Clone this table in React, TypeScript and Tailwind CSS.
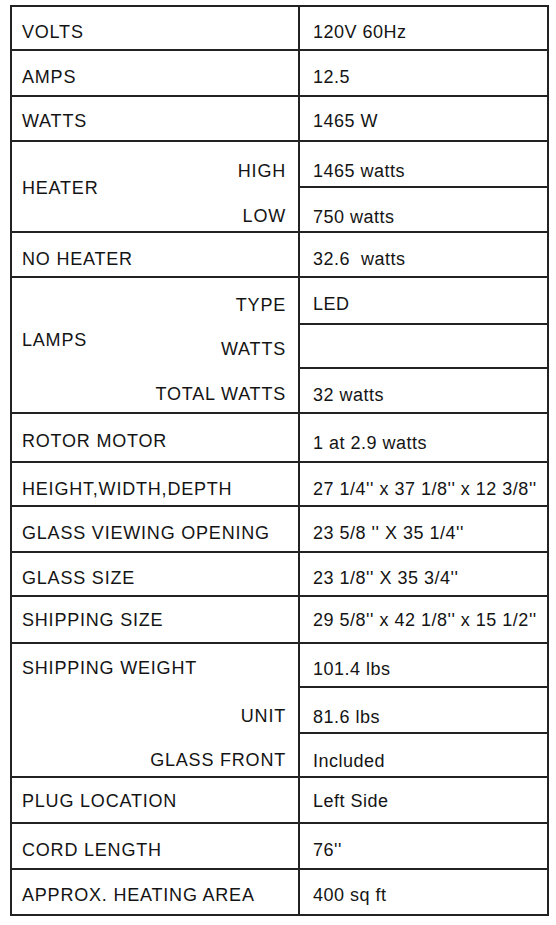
import { Fragment } from 'react';

type Sub = { label?: string; value: string; h: string; pad: string };

type Row =
  | { kind: 'single'; label: string; value: string; h: string; pad: string; vpad?: string }
  | { kind: 'group'; label: string; h: string; labelClass: string; subs: Sub[] };

const rows: Row[] = [
  { kind: 'single', label: 'VOLTS', value: '120V 60Hz', h: 'h-[44px]', pad: 'pt-[7px]' },
  { kind: 'single', label: 'AMPS', value: '12.5', h: 'h-[46px]', pad: 'pt-[8px]' },
  { kind: 'single', label: 'WATTS', value: '1465 W', h: 'h-[45px]', pad: 'pt-[5px]' },
  {
    kind: 'group',
    label: 'HEATER',
    h: 'h-[91px]',
    labelClass: 'justify-center pt-[3px]',
    subs: [
      { label: 'HIGH', value: '1465 watts', h: 'h-[46px]', pad: 'pt-[13px]' },
      { label: 'LOW', value: '750 watts', h: 'h-[45px]', pad: 'pt-[14px]' },
    ],
  },
  { kind: 'single', label: 'NO HEATER', value: '32.6\u00a0 watts', h: 'h-[45px]', pad: 'pt-[9px]' },
  {
    kind: 'group',
    label: 'LAMPS',
    h: 'h-[136px]',
    labelClass: 'justify-center pb-[10px]',
    subs: [
      { label: 'TYPE', value: 'LED', h: 'h-[47px]', pad: 'pt-[7px]' },
      { label: 'WATTS', value: '', h: 'h-[44px]', pad: 'pt-[7px]' },
      { label: 'TOTAL WATTS', value: '32 watts', h: 'h-[45px]', pad: 'pt-[8px]' },
    ],
  },
  { kind: 'single', label: 'ROTOR MOTOR', value: '1 at 2.9 watts', h: 'h-[49px]', pad: 'pt-[7px]', vpad: 'pt-[10px]' },
  { kind: 'single', label: 'HEIGHT,WIDTH,DEPTH', value: "27 1/4'' x 37 1/8'' x 12 3/8''", h: 'h-[44px]', pad: 'pt-[10px]' },
  { kind: 'single', label: 'GLASS VIEWING OPENING', value: "23 5/8 '' X 35 1/4''", h: 'h-[46px]', pad: 'pt-[7px]' },
  { kind: 'single', label: 'GLASS SIZE', value: "23 1/8'' X 35 3/4''", h: 'h-[44px]', pad: 'pt-[8px]' },
  { kind: 'single', label: 'SHIPPING SIZE', value: "29 5/8'' x 42 1/8'' x 15 1/2''", h: 'h-[47px]', pad: 'pt-[1px]' },
  {
    kind: 'group',
    label: 'SHIPPING WEIGHT',
    h: 'h-[134px]',
    labelClass: 'justify-start pt-[14px]',
    subs: [
      { value: '101.4 lbs', h: 'h-[44px]', pad: 'pt-[8px]' },
      { label: 'UNIT', value: '81.6 lbs', h: 'h-[46px]', pad: 'pt-[13px]' },
      { label: 'GLASS FRONT', value: 'Included', h: 'h-[44px]', pad: 'pt-[11px]' },
    ],
  },
  { kind: 'single', label: 'PLUG LOCATION', value: 'Left Side', h: 'h-[46px]', pad: 'pt-[1px]' },
  { kind: 'single', label: 'CORD LENGTH', value: "76''", h: 'h-[46px]', pad: 'pt-[7px]' },
  { kind: 'single', label: 'APPROX. HEATING AREA', value: '400 sq ft', h: 'h-[46px]', pad: 'pt-[5px]' },
];

export default function App() {
  return (
    <div className="min-h-[925px] bg-white pt-[5px] pl-[10px] font-['Liberation_Sans',Arial,sans-serif] text-[18px] leading-[20px] tracking-[0.8px] text-[#141414]">
      <div className="w-[539px] border-x-2 border-t-2 border-[#222]">
        {rows.map((row) => (
          <Fragment key={row.label}>
            {row.kind === 'single' ? (
              <div className={`flex border-b-2 border-[#222] ${row.h}`}>
                <div className={`flex w-[288px] items-center border-r-2 border-[#222] pl-[10px] ${row.pad}`}>
                  {row.label}
                </div>
                <div className={`flex flex-1 items-center pl-[13px] tracking-[0.5px] ${row.vpad ?? row.pad}`}>
                  {row.value}
                </div>
              </div>
            ) : (
              <div className={`flex border-b-2 border-[#222] ${row.h}`}>
                <div className="flex w-[288px] border-r-2 border-[#222]">
                  <div className={`flex min-w-0 flex-1 flex-col whitespace-nowrap pl-[10px] ${row.labelClass}`}>
                    {row.label}
                  </div>
                  <div className="flex shrink-0 flex-col whitespace-nowrap pr-[12px] text-right">
                    {row.subs.map((s, i) => (
                      <div key={i} className={`flex items-center justify-end ${s.h} ${s.pad}`}>
                        {s.label ?? ''}
                      </div>
                    ))}
                  </div>
                </div>
                <div className="flex flex-1 flex-col tracking-[0.5px]">
                  {row.subs.map((s, i) => (
                    <div
                      key={i}
                      className={`flex items-center pl-[13px] ${s.pad} ${
                        i < row.subs.length - 1 ? `${s.h} border-b-2 border-[#222]` : 'flex-1'
                      }`}
                    >
                      {s.value}
                    </div>
                  ))}
                </div>
              </div>
            )}
          </Fragment>
        ))}
      </div>
    </div>
  );
}
